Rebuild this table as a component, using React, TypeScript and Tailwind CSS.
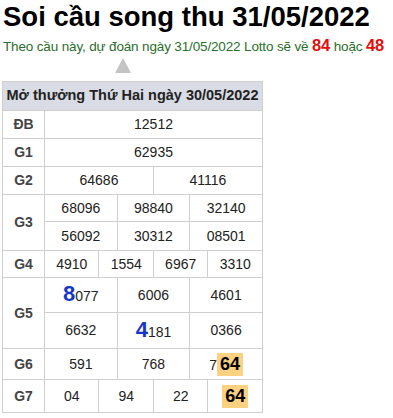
import React from 'react';

const label = 'border border-[#cfcfcf] text-center font-bold text-[#444] text-[14px]';
const cell = 'border border-[#cfcfcf] text-center text-[14px] text-[#222]';

const Big = ({ d, rest }: { d: string; rest: string }) => (
  <span>
    <span className="text-[22px] font-bold text-[#1538c9] leading-none">{d}</span>
    {rest}
  </span>
);

const Hl = ({ v }: { v: string }) => (
  <span className="inline-block bg-[#fcd17f] px-[3px] text-[18px] font-bold text-black leading-[23px]">{v}</span>
);

const App = () => {
  return (
    <div className="w-[393px] h-[418px] bg-white font-['Liberation_Sans',Arial,sans-serif] px-[3px]">
      {/* Title */}
      <h1 className="text-[27.5px] font-bold text-black leading-[32px] pt-[1px] whitespace-nowrap">Soi cầu song thu 31/05/2022</h1>
      <p className="text-[13.5px] text-[#2b6e2b] leading-[20px] mt-[2px] whitespace-nowrap tracking-[-0.15px]">
        Theo cầu này, dự đoán ngày 31/05/2022 Lotto sẽ về{' '}
        <span className="text-[16.5px] font-bold text-[#e30e0e]">84</span> hoặc{' '}
        <span className="text-[16.5px] font-bold text-[#e30e0e]">48</span>
      </p>

      {/* Pointer */}
      <div className="ml-[112px] mt-[1px] w-0 h-0 border-l-[8px] border-r-[8px] border-b-[15px] border-l-transparent border-r-transparent border-b-[#c4c4c4]" />

      {/* Results table */}
      <table className="mt-[8px] -ml-[1px] w-[261px] table-fixed border-collapse border border-[#c8c8c8]">
        <colgroup>
          <col className="w-[42px]" />
          {Array.from({ length: 12 }, (_, i) => (
            <col key={i} />
          ))}
        </colgroup>
        <tbody>
          <tr className="h-[29px] bg-[#d9dce4]">
            <th colSpan={13} className="border border-[#cfcfcf] text-[14.5px] font-bold text-[#222] text-center">
              Mở thưởng Thứ Hai ngày 30/05/2022
            </th>
          </tr>
          <tr className="h-[28px]">
            <td className={label}>ĐB</td>
            <td colSpan={12} className={cell}>12512</td>
          </tr>
          <tr className="h-[28px]">
            <td className={label}>G1</td>
            <td colSpan={12} className={cell}>62935</td>
          </tr>
          <tr className="h-[28px]">
            <td className={label}>G2</td>
            <td colSpan={6} className={cell}>64686</td>
            <td colSpan={6} className={cell}>41116</td>
          </tr>
          <tr className="h-[27px]">
            <td rowSpan={2} className={label}>G3</td>
            <td colSpan={4} className={cell}>68096</td>
            <td colSpan={4} className={cell}>98840</td>
            <td colSpan={4} className={cell}>32140</td>
          </tr>
          <tr className="h-[29px]">
            <td colSpan={4} className={cell}>56092</td>
            <td colSpan={4} className={cell}>30312</td>
            <td colSpan={4} className={cell}>08501</td>
          </tr>
          <tr className="h-[27px]">
            <td className={label}>G4</td>
            <td colSpan={3} className={cell}>4910</td>
            <td colSpan={3} className={cell}>1554</td>
            <td colSpan={3} className={cell}>6967</td>
            <td colSpan={3} className={cell}>3310</td>
          </tr>
          <tr className="h-[35px]">
            <td rowSpan={2} className={label}>G5</td>
            <td colSpan={4} className={cell}><Big d="8" rest="077" /></td>
            <td colSpan={4} className={cell}>6006</td>
            <td colSpan={4} className={cell}>4601</td>
          </tr>
          <tr className="h-[36px]">
            <td colSpan={4} className={cell}>6632</td>
            <td colSpan={4} className={cell}><Big d="4" rest="181" /></td>
            <td colSpan={4} className={cell}>0366</td>
          </tr>
          <tr className="h-[31px]">
            <td className={label}>G6</td>
            <td colSpan={4} className={cell}>591</td>
            <td colSpan={4} className={cell}>768</td>
            <td colSpan={4} className={cell}>7<Hl v="64" /></td>
          </tr>
          <tr className="h-[33px]">
            <td className={label}>G7</td>
            <td colSpan={3} className={cell}>04</td>
            <td colSpan={3} className={cell}>94</td>
            <td colSpan={3} className={cell}>22</td>
            <td colSpan={3} className={cell}><Hl v="64" /></td>
          </tr>
        </tbody>
      </table>
    </div>
  );
};

export default App;
